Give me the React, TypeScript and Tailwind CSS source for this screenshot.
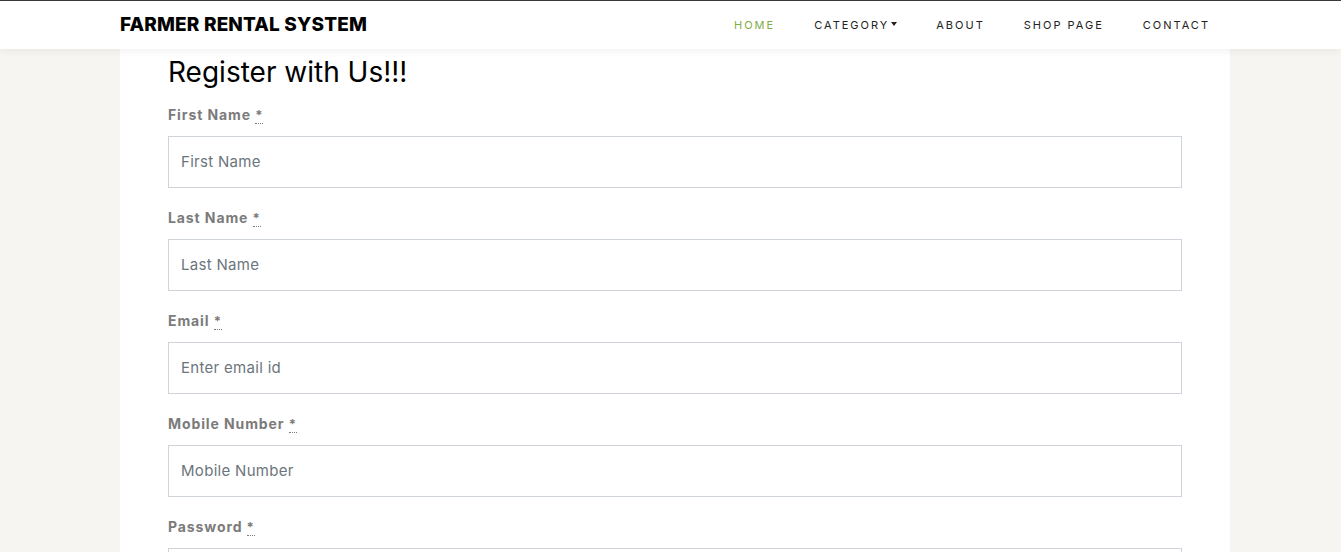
import React from "react";

const fields = [
  { label: "First Name", placeholder: "First Name" },
  { label: "Last Name", placeholder: "Last Name" },
  { label: "Email", placeholder: "Enter email id" },
  { label: "Mobile Number", placeholder: "Mobile Number" },
  { label: "Password", placeholder: "Password" },
];

const navItems = ["HOME", "CATEGORY", "ABOUT", "SHOP PAGE", "CONTACT"];

export default function App() {
  return (
    <div className="min-h-screen bg-[#f6f5f1] font-['Inter',sans-serif] overflow-hidden h-[552px]">
      <nav className="relative z-10 bg-white border-t border-[#3a3a3a] shadow-[0_2px_8px_rgba(0,0,0,0.06)] h-[49px]">
        <div className="ml-[120px] w-[1110px] h-full flex items-center justify-between">
          <div className="text-[19px] font-extrabold text-black tracking-[0.15px]">FARMER RENTAL SYSTEM</div>
          <ul className="flex items-center">
            {navItems.map((item, i) => (
              <li
                key={item}
                className={`pl-[19px] pr-[20px] text-[11px] tracking-[2px] flex items-center ${i === 0 ? "text-[#82ae46]" : "text-[#222]"}`}
              >
                {item}
                {item === "CATEGORY" && (
                  <span className="ml-[2px] -mt-[3px] inline-block w-0 h-0 border-l-[3px] border-r-[3px] border-t-[4px] border-l-transparent border-r-transparent border-t-[#222]" />
                )}
              </li>
            ))}
          </ul>
        </div>
      </nav>
      <div className="ml-[120px] w-[1110px] bg-white px-12 pt-[7px] min-h-[510px]">
        <h2 className="text-[28px] text-black leading-[1.2] mb-[15px]">Register with Us!!!</h2>
        {fields.map((f) => (
          <div key={f.label} className="mb-[20px]">
            <label className="block text-[14px] font-bold text-[#7b7b7b] tracking-[0.9px] leading-[20px] mb-[11px]">
              {f.label}{" "}
              <abbr className="no-underline border-b border-dotted border-[#7b7b7b] text-[13px]" title="required">
                *
              </abbr>
            </label>
            <input
              type="text"
              placeholder={f.placeholder}
              className="block w-full h-[52px] border border-[#ced4da] px-3 text-[15px] tracking-[0.3px] text-[#495057] placeholder:text-[#6c757d] outline-none"
            />
          </div>
        ))}
      </div>
    </div>
  );
}
